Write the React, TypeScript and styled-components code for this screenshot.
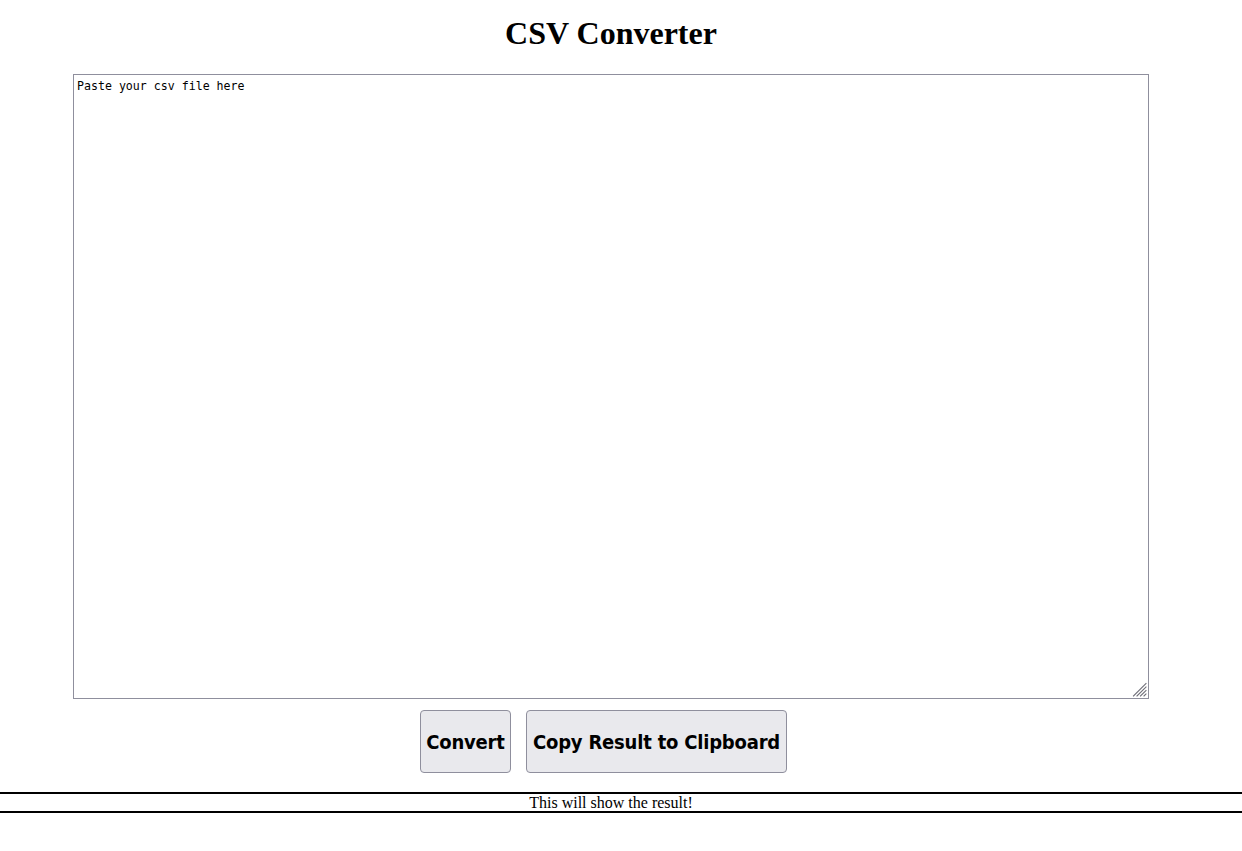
import React from "react";
import styled, { createGlobalStyle } from "styled-components";

const Global = createGlobalStyle`
  html, body { margin: 0; padding: 0; background: #fff; }
  body { font-family: "Liberation Serif", "Times New Roman", serif; color: #000; }
`;

const Page = styled.div`
  display: flex;
  flex-direction: column;
  align-items: stretch;
  padding-top: 15px;
`;

const Title = styled.h1`
  margin: 0 0 22px;
  padding-right: 20px;
  text-align: center;
  font-family: "Liberation Serif", "Times New Roman", serif;
  font-weight: bold;
  font-size: 32px;
  line-height: 37px;
`;

const InputWrap = styled.div`
  position: relative;
  align-self: flex-start;
  margin-left: 73px;
  width: 1076px;
  height: 625px;
`;

const Input = styled.textarea`
  display: block;
  box-sizing: border-box;
  margin: 0;
  width: 1076px;
  height: 625px;
  padding: 5px 3px;
  border: 1px solid #8f8f9d;
  border-radius: 0;
  font-family: "DejaVu Sans Mono", "Liberation Mono", monospace;
  font-size: 11.6px;
  line-height: 13px;
  color: #000;
  background: #fff;
  resize: none;
  outline: none;
`;

const Grip = styled.svg`
  position: absolute;
  right: 2px;
  bottom: 2px;
  width: 15px;
  height: 15px;
  pointer-events: none;
`;

const Actions = styled.div`
  display: flex;
  gap: 15px;
  margin: 11px 0 19px 420px;
`;

const Button = styled.button<{ $w: number }>`
  box-sizing: border-box;
  width: ${(p) => p.$w}px;
  height: 63px;
  padding: 0;
  white-space: nowrap;
  background: #e9e9ed;
  border: 1px solid #8f8f9d;
  border-radius: 4px;
  font-family: "DejaVu Sans Condensed", "DejaVu Sans", sans-serif;
  font-stretch: condensed;
  font-weight: bold;
  font-size: 20px;
  letter-spacing: -0.2px;
  color: #000;
  cursor: pointer;
`;

const Result = styled.div`
  border-top: 2px solid #000;
  border-bottom: 2px solid #000;
  height: 17px;
  line-height: 17px;
  text-align: center;
  padding-right: 20px;
  font-family: "Liberation Serif", "Times New Roman", serif;
  font-size: 16px;
`;

export default function App() {
  return (
    <Page>
      <Global />
      <Title>CSV Converter</Title>
      <InputWrap>
        <Input defaultValue="Paste your csv file here" />
        <Grip viewBox="0 0 15 15">
          <g stroke="#6e6e78" strokeWidth="1.1" strokeLinecap="square">
            <line x1="1.5" y1="14" x2="14" y2="1.5" />
            <line x1="5" y1="14" x2="14" y2="5" />
            <line x1="8.5" y1="14" x2="14" y2="8.5" />
            <line x1="12" y1="14" x2="14" y2="12" />
          </g>
        </Grip>
      </InputWrap>
      <Actions>
        <Button $w={91}>Convert</Button>
        <Button $w={261}>Copy Result to Clipboard</Button>
      </Actions>
      <Result>This will show the result!</Result>
    </Page>
  );
}
